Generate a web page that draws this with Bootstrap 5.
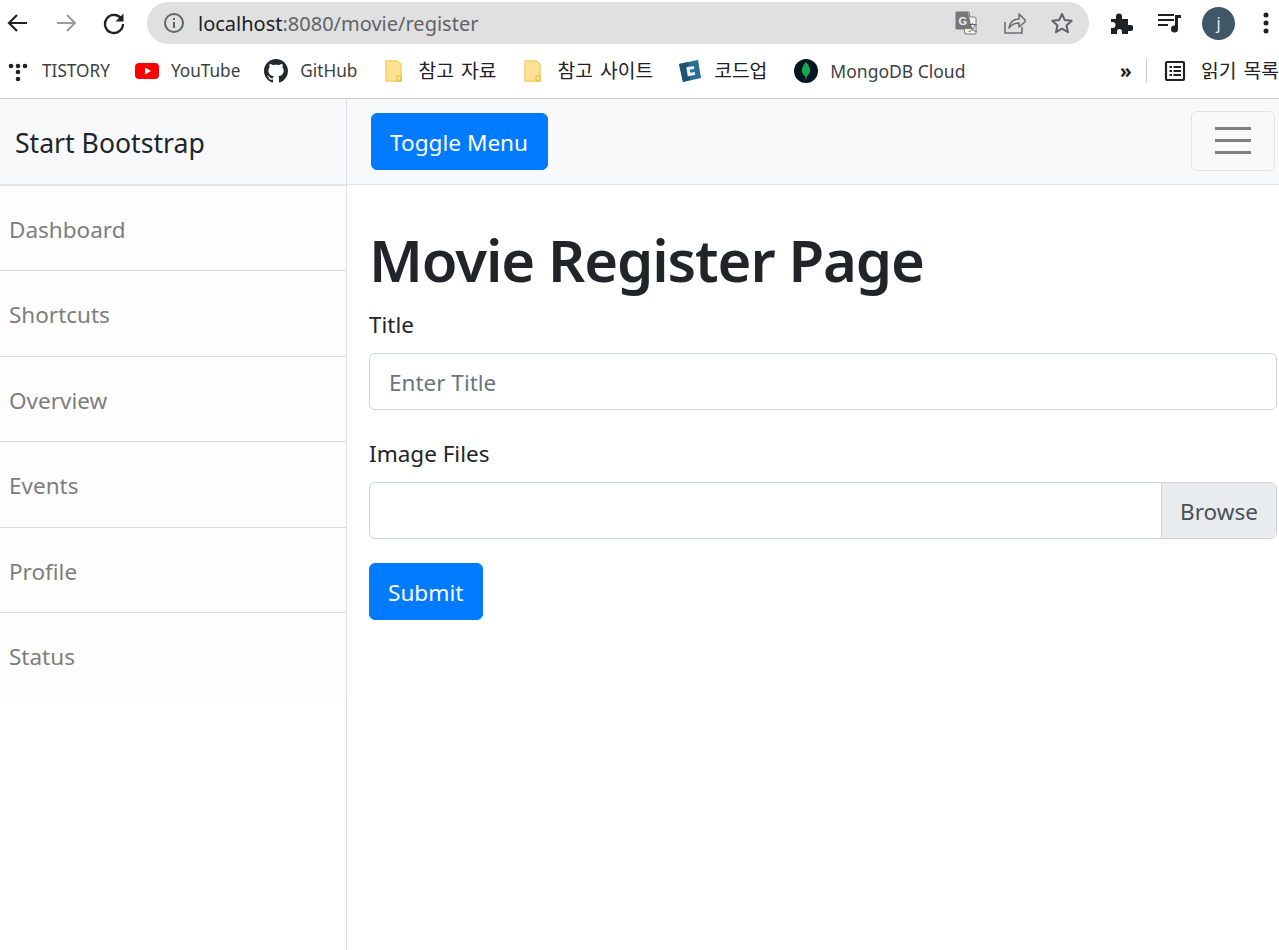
<!DOCTYPE html>
<html lang="ko">
<head>
<meta charset="utf-8">
<title>Movie Register Page</title>
<link rel="stylesheet" href="https://cdn.jsdelivr.net/npm/bootstrap@5.3.0/dist/css/bootstrap.min.css">
<style>
html,body{height:950px;overflow:hidden}
body{font-family:"Noto Sans","Noto Sans CJK KR",sans-serif;font-size:22.5px;color:#212529;background:#fff}
.omni-row{height:48px;padding:0 0 2px 0}
.nav-ico{width:24px;height:24px;flex:none}
.nav-back{margin-left:6px}
.nav-fwd{margin-left:24px}
.nav-rel{margin-left:24px}
.omnibox{width:942px;height:42px;margin-left:21px;background:#e0e0e0;border-radius:21px;padding:0 15px 0 15px;font-size:20px;color:#5f6368;flex:none}
.omni-host{color:#202124}
.omni-url{margin-left:12px;padding-top:2px}
.omni-ico{width:24px;height:24px;margin-left:24px;flex:none}
.tool-ico{width:24px;height:24px;flex:none;margin-left:21px}
.puzzle{margin-left:20px}
.music{margin-left:25px}
.avatar{width:33px;height:33px;border-radius:50%;background:#3f5766;color:#e8eef2;font-size:16px;margin-left:20px;flex:none}
.dots{margin-left:19px;margin-right:1px}
.bm-row{height:51px;border-bottom:1px solid #ccc;font-size:17.2px;color:#3c4043;padding:0 0 4px 8px;white-space:nowrap;overflow:hidden}
.bm-item{margin-right:25px;gap:12px;flex:none}
.bm-yt{margin-right:24px}
.bm-code{margin-right:27px}
.bm-mongo{font-size:17.5px}
.bm-ico{width:24px;height:24px;flex:none}
.bm-tis{width:20px;margin-right:2px}
.bm-folder{width:18px;height:24px;margin:0 3px 0 3px;flex:none}
.bm-ko{color:#202124;font-size:19.3px;word-spacing:2px}
.bm-more{font-size:19px;font-weight:700;color:#202124;width:12px;line-height:1}
.bm-sep{width:1px;height:24px;background:#c8c8c8;margin:0 16px 0 14px}
.bm-spacer{flex:1 1 0}
.bm-read{gap:14px}
.shell{height:851px}
.side-panel{width:347px;flex:none;border-right:1px solid #dee2e6}
.side-head{height:86.5px;background:#f8f9fa;border-bottom:2px solid #e6e6e6;padding:5px 0 0 15px;font-size:26.6px}
.side-item{height:85.5px;padding:4px 0 0 9px;background:#fdfdfd;color:#7e7e7e;border:0;border-bottom:1.5px solid #dcdcdc;border-radius:0;font-size:22.5px;margin-right:1px}
.side-item:last-child{border-bottom:0;height:84.5px}
.top-bar{height:86px;background:#f8f9fa;border-bottom:1px solid #dfe2e5;padding:0 4px 0 24px}
.btn-blue{background:#007bff;border:1px solid #007bff;color:#fff;font-size:22.6px;height:57px;border-radius:6px;line-height:1;padding:3px 19px 0 18px}
.btn-blue:hover{background:#007bff;color:#fff}
.burger{width:84px;height:60px;border:1.5px solid #e2e3e5;border-radius:6px;background:transparent;padding:0;gap:9px;margin-top:-2px}
.burger-line{display:block;width:36px;height:3px;background:#7f7f7f}
.page-body{padding:0 2px 0 22px}
.page-title{font-size:58px;font-weight:600;letter-spacing:-1.1px;line-height:72px;margin:39px 0 0 0;color:#212529}
.fld-label{display:block;line-height:34px;margin-bottom:11px}
.fld-first{margin-top:12px}
.fld-next{margin-top:27px}
.fld-box{height:57px;border:1.5px solid #ced4da;border-radius:6px;font-size:22.5px;padding:2px 19px 0;color:#495057}
.fld-box::placeholder{color:#6c757d;opacity:1}
.file-box{height:57px;border:1.5px solid #ced4da;border-radius:6px;overflow:hidden}
.file-btn{width:115px;background:#e9ecef;border-left:1.5px solid #ced4da;color:#495057;padding-top:2px}
.submit-wrap{margin-top:24px}
</style>
</head>
<body>
<div class="omni-row d-flex align-items-center">
  <svg class="nav-ico nav-back" viewBox="0 0 24 24"><path d="M21 12H4M11 4l-8 8 8 8" fill="none" stroke="#202124" stroke-width="2.2"/></svg>
  <svg class="nav-ico nav-fwd" viewBox="0 0 24 24"><path d="M3 12h17M13 4l8 8-8 8" fill="none" stroke="#9a9a9a" stroke-width="2"/></svg>
  <svg class="nav-ico nav-rel" viewBox="0 0 24 24"><path d="M19.5 8A9 9 0 1 0 21 13" fill="none" stroke="#202124" stroke-width="2.3"/><path d="M21.5 2.5v8h-8z" fill="#202124"/></svg>
  <div class="omnibox d-flex align-items-center">
    <svg class="nav-ico" viewBox="0 0 24 24"><circle cx="12" cy="12" r="9" fill="none" stroke="#5f6368" stroke-width="2"/><path d="M12 11v6M12 7v2" stroke="#5f6368" stroke-width="2"/></svg>
    <span class="omni-url flex-grow-1"><span class="omni-host">localhost</span>:8080/movie/register</span>
    <svg class="omni-ico" viewBox="0 0 24 24"><path d="M2 1h13l1 5h5a2 2 0 0 1 1 1v15a1 1 0 0 1-1 1H11l-1-5H2z" fill="#f1f1f1" stroke="#777" stroke-width="1"/><path d="M2 1h12l4 17H2z" fill="#777"/><text x="4.5" y="14" font-size="11" font-weight="700" fill="#eee" font-family="Liberation Sans">G</text><text x="14" y="20" font-size="9" fill="#555" font-family="Noto Sans CJK SC">文</text></svg>
    <svg class="omni-ico" viewBox="0 0 24 24"><path d="M3 11v11h17v-6" fill="none" stroke="#6b6f73" stroke-width="1.6"/><path d="M7 17c1-6 5-9 10-9V3l7 7-7 6v-4c-4 0-7 1-10 5z" fill="none" stroke="#6b6f73" stroke-width="1.6" stroke-linejoin="round"/></svg>
    <svg class="omni-ico" viewBox="0 0 24 24"><path d="M12 2.8l2.8 6.3 6.9.7-5.2 4.6 1.5 6.8-6-3.5-6 3.5 1.5-6.8-5.200-4.600 6.900-.7z" fill="none" stroke="#5f6368" stroke-width="2" stroke-linejoin="round"/></svg>
  </div>
  <svg class="tool-ico puzzle" viewBox="0 0 24 24"><path d="M2 8h5V5.500a3 3 0 0 1 6 0V8h6v6h2.500a3 3 0 0 1 0 6H19v3H13v-2.500a2.500 2.500 0 0 0-5 0V23H2v-6h1.500a3 3 0 0 0 0-6H2z" fill="#202124"/></svg>
  <svg class="tool-ico music" viewBox="0 0 24 24"><path d="M0 4h16M0 9h16M0 14h10" stroke="#202124" stroke-width="2"/><path d="M17 4h6v3h-3v11a3.500 3.500 0 1 1-3-3.400z" fill="#202124"/></svg>
  <div class="avatar d-flex align-items-center justify-content-center">j</div>
  <svg class="tool-ico dots" viewBox="0 0 8 24"><circle cx="4" cy="4" r="2.500" fill="#202124"/><circle cx="4" cy="12" r="2.500" fill="#202124"/><circle cx="4" cy="20" r="2.500" fill="#202124"/></svg>
</div>

<div class="bm-row d-flex align-items-center">
  <div class="bm-item d-flex align-items-center">
    <svg class="bm-ico bm-tis" viewBox="0 0 20 24"><g fill="#222"><circle cx="3" cy="7" r="2.300"/><circle cx="10" cy="7" r="2.300"/><circle cx="17" cy="7" r="2.300"/><circle cx="10" cy="13" r="2.300"/><circle cx="10" cy="20" r="2.300"/></g></svg>
    <span>TISTORY</span>
  </div>
  <div class="bm-item bm-yt d-flex align-items-center">
    <svg class="bm-ico" viewBox="0 0 24 24"><rect y="4" width="24" height="16" rx="4" fill="#f00"/><path d="M10 8.500v7l6-3.500z" fill="#fff"/></svg>
    <span>YouTube</span>
  </div>
  <div class="bm-item d-flex align-items-center">
    <svg class="bm-ico" viewBox="0 0 16 16"><path fill="#24292f" d="M8 0C3.580 0 0 3.580 0 8c0 3.540 2.290 6.530 5.470 7.590.4.070.55-.17.55-.38 0-.19-.01-.82-.01-1.490-2.010.37-2.530-.49-2.690-.94-.09-.23-.48-.94-.82-1.130-.28-.15-.68-.52-.01-.53.630-.01 1.080.58 1.230.82.720 1.210 1.870.87 2.330.66.070-.52.280-.87.510-1.070-1.780-.2-3.640-.89-3.640-3.950 0-.87.310-1.590.82-2.150-.08-.2-.36-1.020.08-2.120 0 0 .67-.21 2.200.82.640-.18 1.320-.27 2-.27s1.360.09 2 .27c1.530-1.040 2.200-.82 2.200-.82.440 1.100.16 1.920.08 2.120.51.560.82 1.270.82 2.150 0 3.070-1.870 3.750-3.650 3.950.29.250.54.730.54 1.480 0 1.070-.01 1.930-.01 2.200 0 .21.150.46.550.38A8.010 8.010 0 0 0 16 8c0-4.420-3.580-8-8-8z"/></svg>
    <span>GitHub</span>
  </div>
  <div class="bm-item d-flex align-items-center">
    <svg class="bm-folder" viewBox="0 0 18 24"><path d="M1 2h11l4 3v17H1z" fill="#fde293" stroke="#f4cf66" stroke-width="1.500"/><rect x="12" y="17" width="4" height="5" fill="none" stroke="#e8b93e"/></svg>
    <span class="bm-ko">참고 자료</span>
  </div>
  <div class="bm-item d-flex align-items-center">
    <svg class="bm-folder" viewBox="0 0 18 24"><path d="M1 2h11l4 3v17H1z" fill="#fde293" stroke="#f4cf66" stroke-width="1.500"/><rect x="12" y="17" width="4" height="5" fill="none" stroke="#e8b93e"/></svg>
    <span class="bm-ko">참고 사이트</span>
  </div>
  <div class="bm-item bm-code d-flex align-items-center">
    <svg class="bm-ico" viewBox="0 0 24 24"><path d="M1 5l19-4 3 18-18 4z" fill="#2a6f93"/><path d="M1 5l9-2 2 18-7 2z" fill="#1d5473"/><path d="M16 8.500l-6 1 1 6 6-1" fill="none" stroke="#eaf2f6" stroke-width="3"/></svg>
    <span class="bm-ko">코드업</span>
  </div>
  <div class="bm-item bm-mongo d-flex align-items-center">
    <svg class="bm-ico" viewBox="0 0 24 24"><circle cx="12" cy="12" r="12" fill="#061621"/><path d="M12 3c3 3.500 4.500 6.500 4 9.500-.4 2.500-2.300 4-3.500 5l-.2 3h-.7l-.2-3c-1.200-1-3.100-2.500-3.500-5C7.500 9.500 9 6.500 12 3z" fill="#13aa52"/></svg>
    <span>MongoDB Cloud</span>
  </div>
  <div class="bm-spacer"></div>
  <span class="bm-more">»</span>
  <span class="bm-sep"></span>
  <div class="d-flex align-items-center flex-shrink-0 bm-read">
    <svg class="bm-ico" viewBox="0 0 24 24"><rect x="3" y="3" width="18" height="18" rx="1" fill="none" stroke="#202124" stroke-width="2.200"/><path d="M10.500 8H18M10.500 12H18M10.500 16H18M6.500 8H9M6.500 12H9M6.500 16H9" stroke="#202124" stroke-width="2"/></svg>
    <span class="bm-ko">읽기 목록</span>
  </div>
</div>

<div class="shell d-flex">
  <aside class="side-panel">
    <div class="side-head d-flex align-items-center">Start Bootstrap</div>
    <div class="list-group list-group-flush">
      <a href="#" class="list-group-item list-group-item-action side-item d-flex align-items-center">Dashboard</a>
      <a href="#" class="list-group-item list-group-item-action side-item d-flex align-items-center">Shortcuts</a>
      <a href="#" class="list-group-item list-group-item-action side-item d-flex align-items-center">Overview</a>
      <a href="#" class="list-group-item list-group-item-action side-item d-flex align-items-center">Events</a>
      <a href="#" class="list-group-item list-group-item-action side-item d-flex align-items-center">Profile</a>
      <a href="#" class="list-group-item list-group-item-action side-item d-flex align-items-center">Status</a>
    </div>
  </aside>
  <main class="flex-grow-1">
    <nav class="navbar top-bar d-flex justify-content-between align-items-center">
      <button class="btn btn-blue" type="button">Toggle Menu</button>
      <button class="burger d-flex flex-column align-items-center justify-content-center" type="button" aria-label="Menu">
        <span class="burger-line"></span><span class="burger-line"></span><span class="burger-line"></span>
      </button>
    </nav>
    <div class="page-body">
      <h1 class="page-title">Movie Register Page</h1>
      <form>
        <label class="fld-label fld-first" for="t">Title</label>
        <input id="t" class="form-control fld-box" type="text" placeholder="Enter Title">
        <label class="fld-label fld-next">Image Files</label>
        <div class="file-box d-flex">
          <div class="flex-grow-1"></div>
          <div class="file-btn d-flex align-items-center justify-content-center">Browse</div>
        </div>
        <div class="submit-wrap"><button class="btn btn-blue" type="button">Submit</button></div>
      </form>
    </div>
  </main>
</div>
</body>
</html>
